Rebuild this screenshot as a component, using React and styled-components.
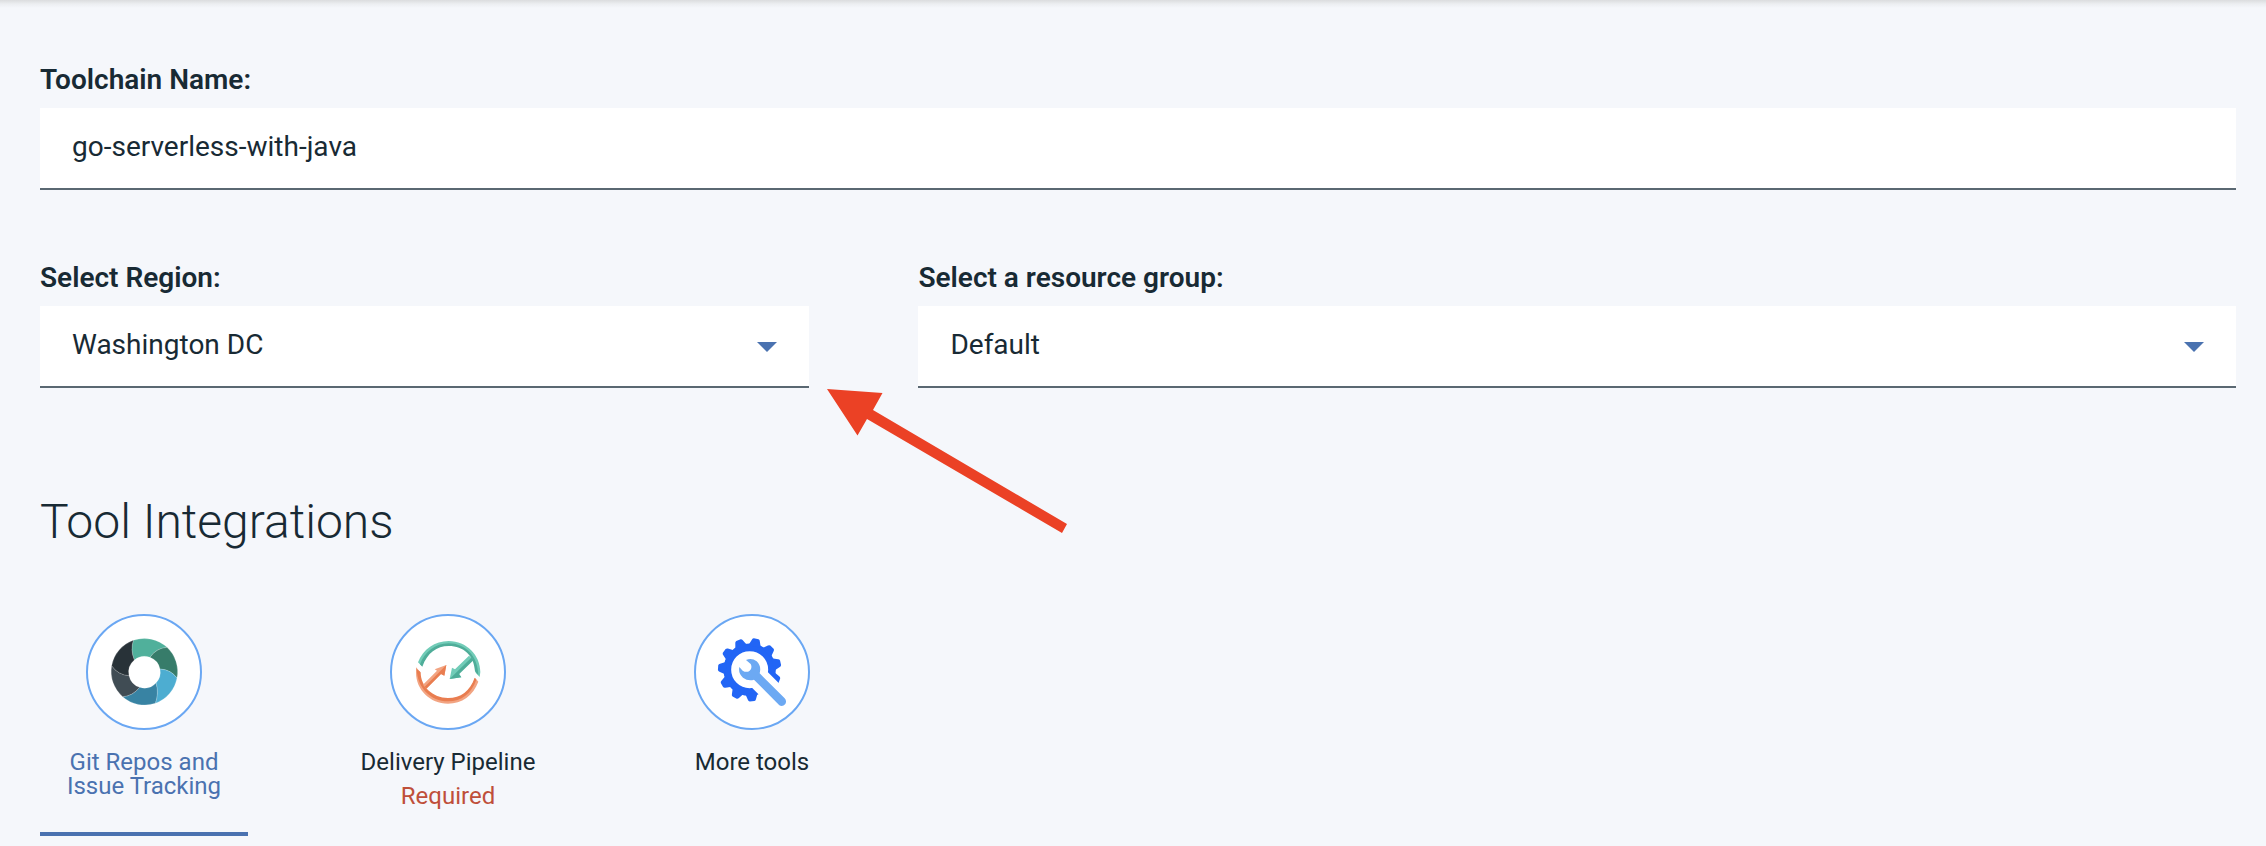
import React from "react";
import styled, { createGlobalStyle } from "styled-components";

const GlobalStyle = createGlobalStyle`
  *, *::before, *::after { box-sizing: border-box; }
  body {
    margin: 0;
    background: #f5f7fb;
    color: #182a34;
    font-family: Roboto, "Liberation Sans", sans-serif;
  }
  button, input, select { font: inherit; color: inherit; }
`;

const Page = styled.main`
  padding: 62px 30px 10px 40px;
  background: linear-gradient(#dbdcde, #eceef1 4px, #f5f7fb 8px);
`;

const FieldRow = styled.div`
  display: flex;
  justify-content: space-between;
  margin-top: 70px;
`;

const Field = styled.div`
  position: relative;
  width: ${({ $width }) => $width || "100%"};
`;

const Label = styled.label`
  display: block;
  margin-bottom: 10px;
  font-size: 28px;
  font-weight: 600;
  line-height: 36px;
`;

const controlStyle = `
  display: block;
  width: 100%;
  height: 82px;
  margin: 0;
  padding: 0 32px 4px;
  border: 0;
  border-bottom: 2px solid #5a6872;
  border-radius: 0;
  background: #fff;
  font-size: 28px;
  outline: none;
`;

const TextInput = styled.input`
  ${controlStyle}
`;

const SelectBox = styled.div`
  position: relative;
`;

const Select = styled.select`
  ${controlStyle}
  appearance: none;
`;

const Caret = styled.svg`
  position: absolute;
  top: 36px;
  right: 32px;
  width: 20px;
  height: 10px;
  pointer-events: none;
`;

const Pointer = styled.svg`
  position: absolute;
  top: 128px;
  left: calc(100% + 17px);
  width: 242px;
  height: 146px;
  pointer-events: none;
`;

const Heading = styled.h2`
  margin: 102px 0 60px;
  font-size: 48px;
  font-weight: 300;
  line-height: 64px;
`;

const TabList = styled.div`
  display: flex;
  flex-wrap: wrap;
  gap: 96px;
`;

const Tab = styled.button`
  display: flex;
  flex-direction: column;
  align-items: center;
  width: 208px;
  min-height: 222px;
  padding: 0 12px;
  border: 0;
  border-bottom: 4px solid ${({ $active }) => ($active ? "#4a72b0" : "transparent")};
  background: none;
  color: ${({ $active }) => ($active ? "#4a72b0" : "#182a34")};
  font-size: 24px;
  line-height: 24px;
  cursor: pointer;
`;

const IconCircle = styled.span`
  display: block;
  width: 116px;
  height: 116px;
  margin-bottom: 20px;
  border: 2px solid #6aa7f3;
  border-radius: 50%;
  background: #fff;

  svg { display: block; width: 100%; height: 100%; }
`;

const Required = styled.span`
  margin-top: 10px;
  color: #bf4f3a;
`;

function SelectField({ id, label, value, width, children }) {
  return (
    <Field $width={width}>
      <Label htmlFor={id}>{label}</Label>
      <SelectBox>
        <Select id={id} defaultValue={value}>
          <option value={value}>{value}</option>
        </Select>
        <Caret viewBox="0 0 20 10" aria-hidden="true">
          <path d="M0 0H20L10 10Z" fill="#4a72b0" />
        </Caret>
      </SelectBox>
      {children}
    </Field>
  );
}

function GitIcon() {
  return (
    <svg viewBox="54 48 336 336" aria-hidden="true">
      <g stroke="#fff" strokeOpacity="0.35" strokeWidth="1.5">
        <path fill="#50b09b" d="M190 121A100 100 0 0 1 291 142Q258 145 240 172A48 48 0 0 0 193 180Q180 150 190 121Z" />
        <path fill="#377c6a" d="M291 142A100 100 0 0 1 321 234Q303 209 270 207A48 48 0 0 0 240 172Q258 145 291 142Z" />
        <path fill="#4dadd1" d="M321 234A100 100 0 0 1 256 310Q267 279 258 249A48 48 0 0 0 270 207Q303 209 321 234Z" />
        <path fill="#3883a3" d="M256 310A100 100 0 0 1 158 290Q188 288 209 262A48 48 0 0 0 258 249Q267 279 256 310Z" />
        <path fill="#404c54" d="M158 290A100 100 0 0 1 125 197Q143 224 177 227A48 48 0 0 0 209 262Q188 288 158 290Z" />
        <path fill="#283238" d="M125 197A100 100 0 0 1 190 121Q180 150 193 180A48 48 0 0 0 177 227Q143 224 125 197Z" />
      </g>
    </svg>
  );
}

function PipelineIcon() {
  return (
    <svg viewBox="54 48 336 336" aria-hidden="true">
      <path fill="#72ccb8" d="M132 187C147 148 183 123 224 123C278 123 319 166 319 216L317 231L305 218C306 172 272 134 224 134C188 134 160 156 143 198Z" />
      <path fill="#4fad99" d="M138 193C152 156 183 130 224 130C276 130 312 171 313 225L303 214C300 166 269 138 224 138C188 138 160 159 145 200Z" />
      <path fill="#72ccb8" d="M285 167L296 177L254 219L262 232L227 237L234 203L243 208Z" />
      <path fill="#4fad99" d="M292 173L299 180L255 223L262 232L227 237Z" />
      <path fill="#f2a482" d="M126 202L138 215C137 262 176 299 222 299C259 299 289 278 303 233L313 245C298 286 263 311 222 311C168 311 126 268 126 218Z" />
      <path fill="#e97d50" d="M128 207L140 217C140 260 176 294 222 294C260 294 288 273 302 233L307 239C292 281 263 304 222 304C170 304 130 264 128 207Z" />
      <path fill="#f2a482" d="M147 254L189 212L182 208L217 195L211 227L201 222L157 266Z" />
      <path fill="#e97d50" d="M152 260L217 195L211 227L201 222L157 266Z" />
    </svg>
  );
}

const TOOTH_COUNT = 11;

function ToolsIcon() {
  return (
    <svg viewBox="48 48 336 336" aria-hidden="true">
      <circle cx="209" cy="209" r="67" fill="none" stroke="#2265f5" strokeWidth="23" />
      {Array.from({ length: TOOTH_COUNT }, (_, i) => (
        <path
          key={i}
          fill="#2265f5"
          d="M190 138L197 119Q198 115 202 114H216Q220 115 221 119L228 138Z"
          transform={`rotate(${12 + (i * 360) / TOOTH_COUNT} 209 209)`}
        />
      ))}
      <path fill="#fff" d="M230 183L340 293L293 340L183 230Z" />
      <path
        fill="#6ca9f3"
        d="M198 180Q215 172 230 184Q245 198 239 220L314 295Q321 303 316 312Q308 321 298 316L222 239Q204 244 189 233Q174 220 178 201L188 212Q200 219 209 212Q218 204 212 192Z"
      />
    </svg>
  );
}

export default function App() {
  return (
    <>
      <GlobalStyle />
      <Page>
        <Field>
          <Label htmlFor="toolchain-name">Toolchain Name:</Label>
          <TextInput id="toolchain-name" type="text" defaultValue="go-serverless-with-java" />
        </Field>

        <FieldRow>
          <SelectField id="region" label="Select Region:" value="Washington DC" width="35%">
            <Pointer viewBox="826 388 242 146" aria-hidden="true">
              <path
                fill="#eb4125"
                d="M827 389L882.500 393L873 410L1067 524L1062 533L867 419L857.500 435.500Z"
              />
            </Pointer>
          </SelectField>
          <SelectField id="resource-group" label="Select a resource group:" value="Default" width="60%" />
        </FieldRow>

        <Heading>Tool Integrations</Heading>

        <TabList role="tablist" aria-label="Tool Integrations">
          <Tab type="button" role="tab" aria-selected="true" $active>
            <IconCircle><GitIcon /></IconCircle>
            <span>Git Repos and Issue Tracking</span>
          </Tab>
          <Tab type="button" role="tab" aria-selected="false">
            <IconCircle><PipelineIcon /></IconCircle>
            <span>Delivery Pipeline</span>
            <Required>Required</Required>
          </Tab>
          <Tab type="button" role="tab" aria-selected="false">
            <IconCircle><ToolsIcon /></IconCircle>
            <span>More tools</span>
          </Tab>
        </TabList>
      </Page>
    </>
  );
}
